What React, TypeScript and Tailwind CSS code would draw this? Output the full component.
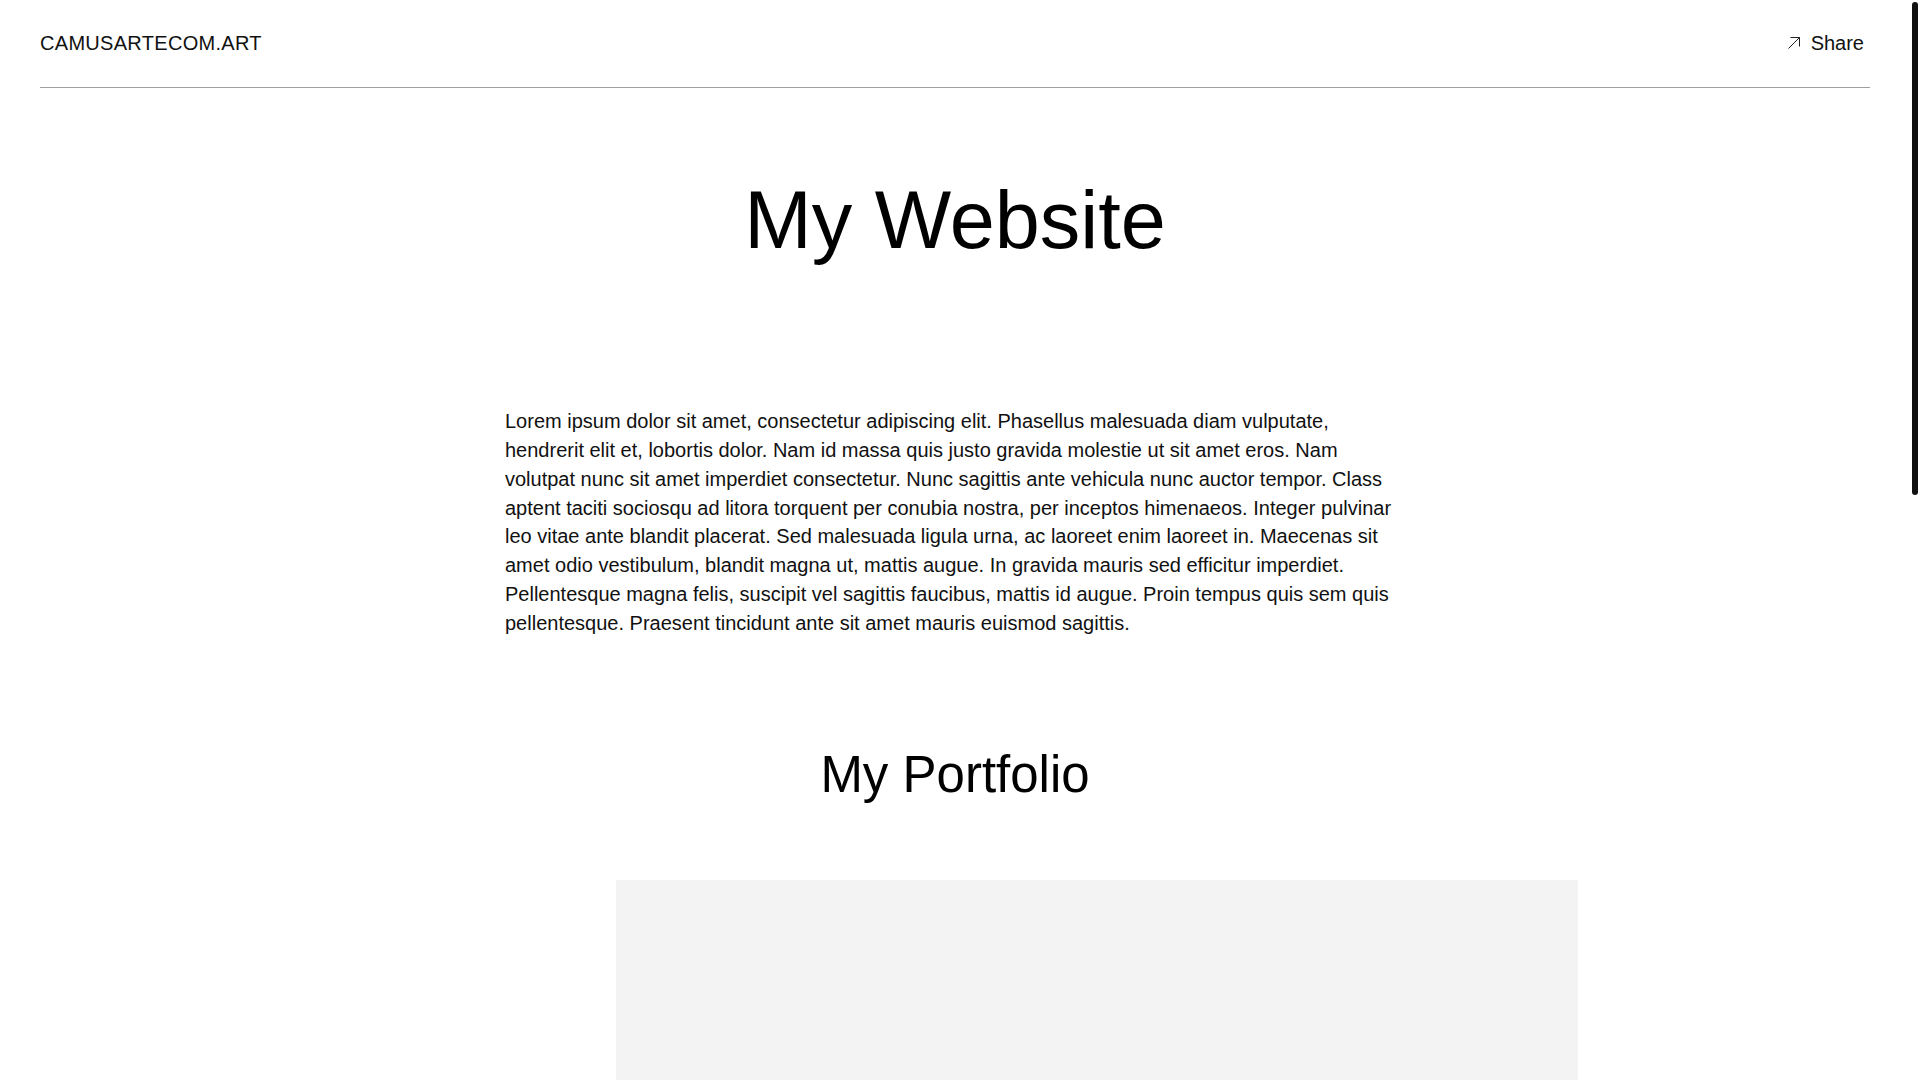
import React from "react";

const para =
  "Lorem ipsum dolor sit amet, consectetur adipiscing elit. Phasellus malesuada diam vulputate, hendrerit elit et, lobortis dolor. Nam id massa quis justo gravida molestie ut sit amet eros. Nam volutpat nunc sit amet imperdiet consectetur. Nunc sagittis ante vehicula nunc auctor tempor. Class aptent taciti sociosqu ad litora torquent per conubia nostra, per inceptos himenaeos. Integer pulvinar leo vitae ante blandit placerat. Sed malesuada ligula urna, ac laoreet enim laoreet in. Maecenas sit amet odio vestibulum, blandit magna ut, mattis augue. In gravida mauris sed efficitur imperdiet. Pellentesque magna felis, suscipit vel sagittis faucibus, mattis id augue. Proin tempus quis sem quis pellentesque. Praesent tincidunt ante sit amet mauris euismod sagittis.";

function ArrowIcon() {
  return (
    <svg width="14" height="14" viewBox="0 0 14 14" fill="none" className="block">
      <path d="M1.5 12.5 L12.5 1.5 M3.5 1.5 H12.5 V10.5" stroke="#222" strokeWidth="1" />
    </svg>
  );
}

export default function App() {
  return (
    <div className="flex h-screen overflow-hidden bg-white text-[#111] [font-family:'Liberation_Sans',Arial,sans-serif]">
      <div className="min-w-0 flex-1">
        <header className="mx-10 flex h-[88px] items-center justify-between border-b border-[#a0a0a0] pb-[1px]">
          <a className="text-[20px] leading-none tracking-[0.3px] text-[#111]">CAMUSARTECOM.ART</a>
          <button className="flex items-center gap-[10px] px-[6px] text-[20px] leading-none text-[#111]">
            <ArrowIcon />
            <span>Share</span>
          </button>
        </header>

        <main className="flex flex-col items-center pb-[286px]">
          <h1 className="mt-[84px] text-[81px] leading-[1.2] font-normal text-black">My Website</h1>
          <p className="mt-[138px] w-[900px] text-[20px] leading-[28.8px] text-[#111]">{para}</p>
          <h2 className="mt-[106px] text-[51px] leading-[1.2] font-normal text-black">My Portfolio</h2>
          <div className="mt-[75px] flex w-full">
            <div className="ml-[616px] h-[1200px] w-[962px] bg-[#f3f3f3]" />
          </div>
        </main>
      </div>

      <div className="w-[10px] shrink-0 bg-white px-[2px] pt-[2px]">
        <div className="h-[493px] rounded-full bg-[#111]" />
      </div>
    </div>
  );
}
